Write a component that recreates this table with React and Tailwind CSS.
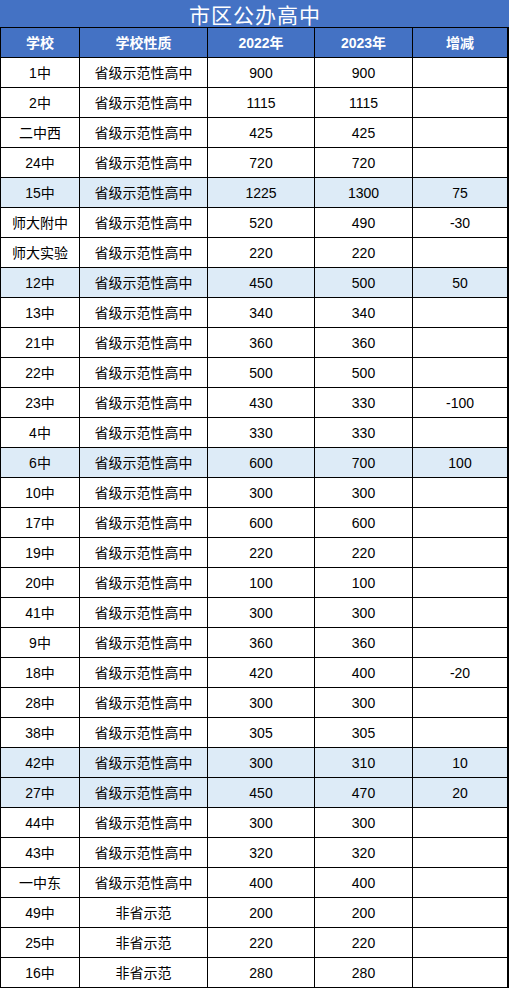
import React from "react";

const rows = [
  ["1中", "省级示范性高中", "900", "900", ""],
  ["2中", "省级示范性高中", "1115", "1115", ""],
  ["二中西", "省级示范性高中", "425", "425", ""],
  ["24中", "省级示范性高中", "720", "720", ""],
  ["15中", "省级示范性高中", "1225", "1300", "75", true],
  ["师大附中", "省级示范性高中", "520", "490", "-30"],
  ["师大实验", "省级示范性高中", "220", "220", ""],
  ["12中", "省级示范性高中", "450", "500", "50", true],
  ["13中", "省级示范性高中", "340", "340", ""],
  ["21中", "省级示范性高中", "360", "360", ""],
  ["22中", "省级示范性高中", "500", "500", ""],
  ["23中", "省级示范性高中", "430", "330", "-100"],
  ["4中", "省级示范性高中", "330", "330", ""],
  ["6中", "省级示范性高中", "600", "700", "100", true],
  ["10中", "省级示范性高中", "300", "300", ""],
  ["17中", "省级示范性高中", "600", "600", ""],
  ["19中", "省级示范性高中", "220", "220", ""],
  ["20中", "省级示范性高中", "100", "100", ""],
  ["41中", "省级示范性高中", "300", "300", ""],
  ["9中", "省级示范性高中", "360", "360", ""],
  ["18中", "省级示范性高中", "420", "400", "-20"],
  ["28中", "省级示范性高中", "300", "300", ""],
  ["38中", "省级示范性高中", "305", "305", ""],
  ["42中", "省级示范性高中", "300", "310", "10", true],
  ["27中", "省级示范性高中", "450", "470", "20", true],
  ["44中", "省级示范性高中", "300", "300", ""],
  ["43中", "省级示范性高中", "320", "320", ""],
  ["一中东", "省级示范性高中", "400", "400", ""],
  ["49中", "非省示范", "200", "200", ""],
  ["25中", "非省示范", "220", "220", ""],
  ["16中", "非省示范", "280", "280", ""],
];

const widths = ["w-[79px]", "w-[128px]", "w-[107px]", "w-[98px]", "w-[96px]"];

function Row({ cells, header, hl }) {
  const bg = header ? "bg-[#4472c4] text-white font-bold" : hl ? "bg-[#ddebf7] text-black" : "bg-white text-black";
  return (
    <div className={`flex h-[30px] border-b border-black border-l ${bg}`}>
      {cells.map((c, i) => (
        <div
          key={i}
          className={`${widths[i]} shrink-0 flex items-center justify-center ${i === 4 ? "border-r-2" : "border-r"} border-black whitespace-nowrap`}
        >
          {c}
        </div>
      ))}
    </div>
  );
}

export default function App() {
  return (
    <div
      className="w-[509px] bg-white text-[14px] leading-none"
      style={{ fontFamily: '"Liberation Sans", "Noto Sans CJK SC", sans-serif' }}
    >
      <div
        className="h-[28px] bg-[#4472c4] flex items-center justify-center text-white text-[21px] leading-[26px] border-b border-black"
        style={{ fontFamily: '"Noto Sans CJK SC", sans-serif' }}
      >
        <span className="tracking-[1px] pl-[1px]">市区公办高中</span>
      </div>
      <Row header cells={["学校", "学校性质", "2022年", "2023年", "增减"]} />
      {rows.map((r, i) => (
        <Row key={i} cells={r.slice(0, 5)} hl={r[5]} />
      ))}
    </div>
  );
}
